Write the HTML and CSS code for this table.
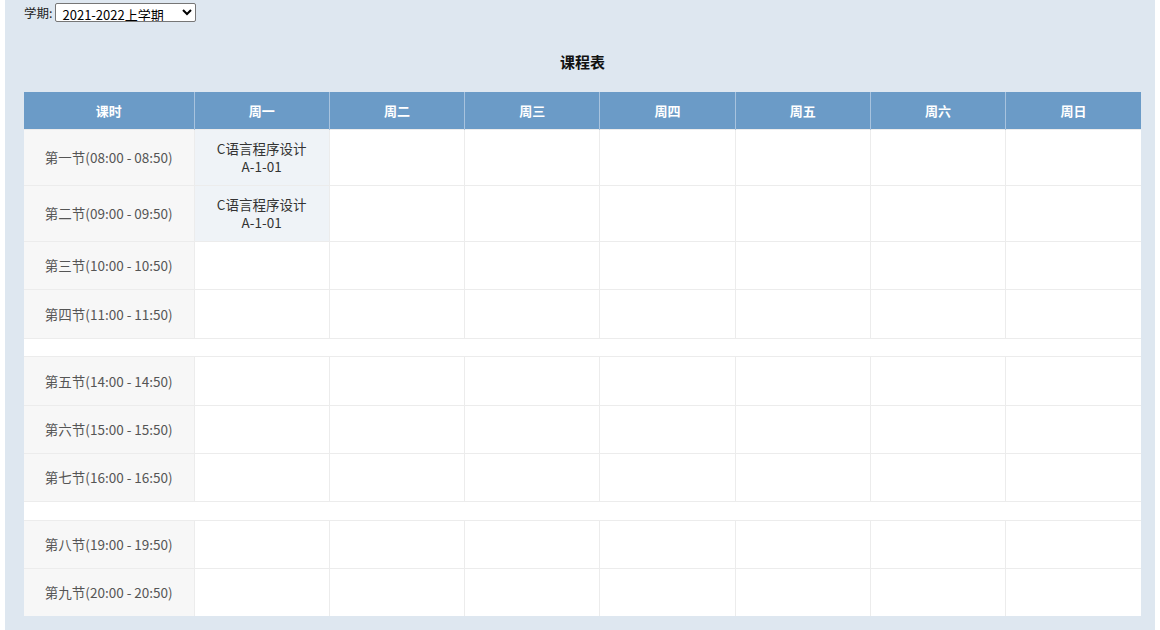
FILE: index.html
```html
<!DOCTYPE html>
<html lang="zh">
<head>
<meta charset="utf-8">
<link rel="stylesheet" href="styles.css">
</head>
<body>
<div class="page">
  <div class="term">
    <label class="term-label">学期:</label>
    <select class="term-select">
      <option>2021-2022上学期</option>
    </select>
  </div>
  <h1 class="title">课程表</h1>
  <table class="schedule">
    <colgroup>
      <col class="col-time">
      <col><col><col><col><col><col><col>
    </colgroup>
    <thead>
      <tr><th>课时</th><th>周一</th><th>周二</th><th>周三</th><th>周四</th><th>周五</th><th>周六</th><th>周日</th></tr>
    </thead>
    <tbody>
      <tr class="tall"><td class="time">第一节(08:00 - 08:50)</td><td class="course">C语言程序设计<br>A-1-01</td><td></td><td></td><td></td><td></td><td></td><td></td></tr>
      <tr class="tall"><td class="time">第二节(09:00 - 09:50)</td><td class="course">C语言程序设计<br>A-1-01</td><td></td><td></td><td></td><td></td><td></td><td></td></tr>
      <tr><td class="time">第三节(10:00 - 10:50)</td><td></td><td></td><td></td><td></td><td></td><td></td><td></td></tr>
      <tr class="r49"><td class="time">第四节(11:00 - 11:50)</td><td></td><td></td><td></td><td></td><td></td><td></td><td></td></tr>
      <tr class="gap"><td colspan="8"></td></tr>
      <tr class="r49"><td class="time">第五节(14:00 - 14:50)</td><td></td><td></td><td></td><td></td><td></td><td></td><td></td></tr>
      <tr><td class="time">第六节(15:00 - 15:50)</td><td></td><td></td><td></td><td></td><td></td><td></td><td></td></tr>
      <tr><td class="time">第七节(16:00 - 16:50)</td><td></td><td></td><td></td><td></td><td></td><td></td><td></td></tr>
      <tr class="gap gap2"><td colspan="8"></td></tr>
      <tr><td class="time">第八节(19:00 - 19:50)</td><td></td><td></td><td></td><td></td><td></td><td></td><td></td></tr>
      <tr><td class="time">第九节(20:00 - 20:50)</td><td></td><td></td><td></td><td></td><td></td><td></td><td></td></tr>
    </tbody>
  </table>
</div>
</body>
</html>
```
FILE: styles.css
```css
html, body {
  margin: 0;
  padding: 0;
  background: #ffffff;
}
body {
  font-family: "Noto Sans CJK SC", "Noto Sans", sans-serif;
  font-size: 13px;
  color: #333;
}
.page {
  margin: 0 5px;
  height: 630px;
  box-sizing: border-box;
  padding: 3px 14px 0 19px;
  background: #dee7f0;
  overflow: hidden;
}
.term {
  display: flex;
  align-items: center;
  gap: 3px;
  height: 19px;
}
.term-label {
  font-size: 12.5px;
  color: #222;
}
.term-select {
  width: 141px;
  height: 19px;
  font-family: "Noto Sans CJK SC", sans-serif;
  font-size: 13px;
  color: #000;
  background: #fff;
  border: 1px solid #767676;
  border-radius: 2px;
  padding: 0 2px;
}
.title {
  margin: 0;
  height: 70px;
  line-height: 80px;
  box-sizing: border-box;
  text-align: center;
  font-size: 15px;
  font-weight: bold;
  color: #111;
}
.schedule {
  width: 1117px;
  border-collapse: collapse;
  table-layout: fixed;
  background: #fff;
}
.col-time { width: 170px; }
.schedule th {
  height: 37px;
  padding: 0;
  background: #6b9bc7;
  color: #fff;
  font-size: 13px;
  font-weight: bold;
  border-left: 1px solid #a8c3de;
  box-sizing: border-box;
}
.schedule th:first-child { border-left: none; }
.schedule td {
  height: 48px;
  padding: 0;
  text-align: center;
  border: 1px solid #ececec;
  box-sizing: border-box;
  color: #444;
  font-size: 13px;
  line-height: 18px;
}
.schedule tr.tall td { height: 56px; }
.schedule tr.r49 td { height: 49px; }
.schedule td.time {
  background: #f7f7f7;
  color: #555;
  font-size: 13.5px;
  border-left: none;
}
.schedule td.course {
  background: #eff3f7;
  color: #333;
  font-size: 13.5px;
}
.schedule tr.gap td {
  height: 18px;
  background: #fff;
  border-left: none;
}
.schedule tr.gap2 td { height: 19px; }
.schedule td:last-child { border-right: none; }
.schedule tbody tr:last-child td { border-bottom: none; }
```
